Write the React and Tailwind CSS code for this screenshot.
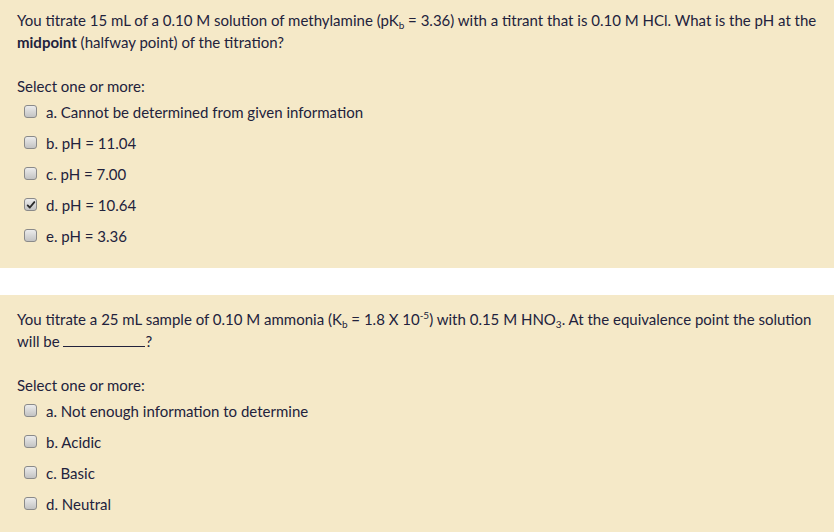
import React from 'react';

function Box({ checked }) {
  return (
    <span className="relative inline-flex w-[13px] h-[13px] shrink-0 items-center justify-center rounded-[3px] border border-[#8a8a8a] bg-gradient-to-b from-[#ececec] to-[#c3c3c3]">
      {checked && (
        <svg viewBox="0 0 12 12" className="w-[10px] h-[10px]">
          <path d="M2 6.5 L4.6 9 L10 2.5" fill="none" stroke="#2a2a2a" strokeWidth="2.2" strokeLinecap="round" strokeLinejoin="round" />
        </svg>
      )}
    </span>
  );
}

function Option({ label, checked }) {
  return (
    <div className="flex items-center h-[31px] pl-[24px]">
      <Box checked={checked} />
      <span className="ml-[9px]">{label}</span>
    </div>
  );
}

const sub = 'relative top-[3px] text-[10px] leading-none align-baseline';
const sup = 'relative -top-[6px] text-[10px] leading-none align-baseline';

export default function App() {
  return (
    <div className="w-[834px] h-[532px] bg-white text-[#22223c] text-[15px] leading-[22px]" style={{ fontFamily: 'Lato, "Open Sans", sans-serif' }}>
      <div className="h-[268px] bg-[#f5e9c8] px-[17px] pt-[9px]">
        <p>
          You titrate 15 mL of a 0.10 M solution of methylamine (pK<span className={sub}>b</span> = 3.36) with a titrant that is 0.10 M HCl. What is the pH at the{' '}
          <b className="font-bold">midpoint</b> (halfway point) of the titration?
        </p>
        <p className="mt-[22px]">Select one or more:</p>
        <div className="-ml-[17px] mt-[-1px]">
          <Option label="a. Cannot be determined from given information" />
          <Option label="b. pH = 11.04" />
          <Option label="c. pH = 7.00" />
          <Option label="d. pH = 10.64" checked />
          <Option label="e. pH = 3.36" />
        </div>
      </div>
      <div className="h-[27px]" />
      <div className="h-[237px] bg-[#f5e9c8] px-[17px] pt-[13px]">
        <p>
          You titrate a 25 mL sample of 0.10 M ammonia (K<span className={sub}>b</span> = 1.8 X 10<span className={sup}>-5</span>) with 0.15 M HNO<span className={sub}>3</span>. At the equivalence point the solution will be{' '}
          <span className="inline-block w-[82px] h-[14px] border-b border-[#22223c] align-baseline" />?
        </p>
        <p className="mt-[22px]">Select one or more:</p>
        <div className="-ml-[17px] mt-[-1px]">
          <Option label="a. Not enough information to determine" />
          <Option label="b. Acidic" />
          <Option label="c. Basic" />
          <Option label="d. Neutral" />
        </div>
      </div>
    </div>
  );
}
